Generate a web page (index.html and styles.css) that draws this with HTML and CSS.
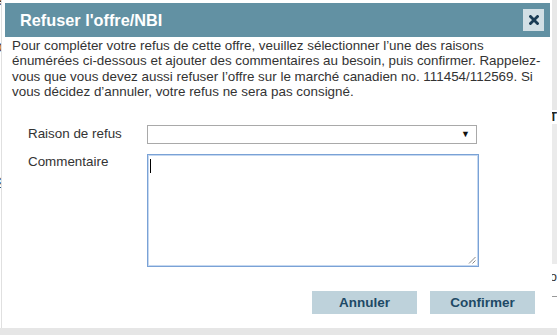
FILE: index.html
```html
<!DOCTYPE html>
<html lang="fr">
<head>
<meta charset="utf-8">
<title>Refuser l'offre/NBI</title>
<link rel="stylesheet" href="styles.css">
</head>
<body>
<div class="page">
  <div class="page-main">
    <span class="frag frag-e">e</span>
    <span class="frag frag-0">0</span>
    <span class="frag frag-i">i</span>
    <span class="frag frag-link">:</span>
    <span class="frag frag-link">i</span>
    <span class="frag frag-link">K</span>
  </div>
  <div class="page-side">
    <div class="side-top"></div>
    <span class="side-t">T</span>
    <div class="side-mid"></div>
    <span class="side-o">o</span>
    <div class="side-line"></div>
  </div>
</div>
<div class="page-footer"></div>

<div class="dialog" role="dialog" aria-labelledby="dlg-title">
  <div class="dialog-titlebar">
    <span class="dialog-title" id="dlg-title">Refuser l'offre/NBI</span>
    <button class="dialog-close" type="button" aria-label="Fermer">
      <svg width="10" height="10" viewBox="0 0 10 10"><path d="M1.5 1.5 L8.5 8.5 M8.5 1.5 L1.5 8.5" stroke="#1b3c55" stroke-width="2.8" stroke-linecap="square"/></svg>
    </button>
  </div>
  <div class="dialog-body">
    <p class="intro">Pour compléter votre refus de cette offre, veuillez sélectionner l’une des raisons<br>énumérées ci-dessous et ajouter des commentaires au besoin, puis confirmer. Rappelez-<br>vous que vous devez aussi refuser l’offre sur le marché canadien no. 111454/112569. Si<br>vous décidez d’annuler, votre refus ne sera pas consigné.</p>
    <div class="form">
      <div class="row row-select">
        <label class="label">Raison de refus</label>
        <div class="select"><span class="arrow">▼</span></div>
      </div>
      <div class="row row-text">
        <label class="label">Commentaire</label>
        <div class="textarea">
          <span class="caret"></span>
          <svg class="grip" width="9" height="9" viewBox="0 0 9 9"><path d="M8.5 2 L2 8.5 M8.5 5.5 L5.5 8.5" stroke="#888" stroke-width="1"/></svg>
        </div>
      </div>
    </div>
    <div class="actions">
      <button class="btn" type="button">Annuler</button>
      <button class="btn" type="button">Confirmer</button>
    </div>
  </div>
</div>
</body>
</html>
```
FILE: styles.css
```css
html, body {
  margin: 0;
  padding: 0;
}
body {
  width: 557px;
  height: 335px;
  overflow: hidden;
  background: #ffffff;
  font-family: "Liberation Sans", Arial, sans-serif;
  position: relative;
}
.page {
  display: flex;
  height: 328px;
}
.page-main {
  width: 553px;
  display: flex;
  flex-direction: column;
  font-size: 13px;
  color: #333;
}
.frag {
  display: block;
  margin-left: -5px;
  line-height: 14px;
}
.frag-e { margin-top: -6px; }
.frag-0 { margin-top: 33px; }
.frag-i { margin-top: 48px; color: #1c4f7a; font-weight: bold; }
.frag-link { color: #2a5d8a; text-decoration: underline; margin-top: 10px; }
.page-side {
  flex: 1;
  display: flex;
  flex-direction: column;
  background: #ffffff;
}
.side-top {
  height: 110px;
  background: #e8e8e8;
}
.side-t {
  font-size: 12px;
  font-weight: bold;
  color: #222;
  line-height: 14px;
}
.side-mid {
  height: 140px;
  background: #ebebeb;
}
.side-o {
  font-size: 13px;
  color: #333;
  line-height: 14px;
  margin-top: 6px;
}
.side-line {
  margin-top: 12px;
  height: 1px;
  background: #999;
}
.page-footer {
  height: 7px;
  background: #e6e6e6;
}

/* dialog */
.dialog {
  position: absolute;
  left: 1px;
  top: 0;
  width: 551px;
  height: 328px;
  background: #ffffff;
  border-left: 1px solid #e0e0e0;
  box-sizing: border-box;
  display: flex;
  flex-direction: column;
  padding: 3px 2px 0 3px;
}
.dialog-titlebar {
  height: 34px;
  background: #6291a3;
  display: flex;
  align-items: center;
  justify-content: space-between;
  padding: 0 6px 0 15px;
  flex-shrink: 0;
}
.dialog-title {
  color: #ffffff;
  font-weight: bold;
  font-size: 16.3px;
}
.dialog-close {
  width: 21px;
  height: 22px;
  padding: 0;
  border: none;
  background: #d2dfe5;
  display: flex;
  align-items: center;
  justify-content: center;
}
.dialog-body {
  flex: 1;
  display: flex;
  flex-direction: column;
  padding: 0 4px 0 7px;
}
.intro {
  margin: 1px 0 0 0;
  font-size: 13.4px;
  line-height: 15.4px;
  white-space: nowrap;
  color: #333333;
}
.form {
  display: flex;
  flex-direction: column;
  gap: 10px;
  margin-top: 25px;
}
.row {
  display: flex;
  align-items: flex-start;
}
.label {
  width: 119px;
  padding-left: 16px;
  font-size: 13.4px;
  color: #333333;
  flex-shrink: 0;
}
.row-select .label { padding-top: 1px; }
.select {
  width: 330px;
  height: 19px;
  box-sizing: border-box;
  border: 1px solid #a9a9a9;
  background: #fff;
  display: flex;
  align-items: center;
  justify-content: flex-end;
  padding-right: 6px;
}
.arrow {
  font-size: 9px;
  color: #111;
  line-height: 9px;
}
.row-text .label { padding-top: 0px; }
.textarea {
  width: 332px;
  height: 113px;
  box-sizing: border-box;
  border: 1px solid #7aa2d6;
  box-shadow: inset 0 0 0 1px #c5d8f0;
  background: #fff;
  display: flex;
  flex-direction: column;
  justify-content: space-between;
  align-items: flex-start;
  padding: 4px 2px 2px 2px;
}
.caret {
  width: 1px;
  height: 14px;
  background: #000;
}
.grip {
  align-self: flex-end;
}
.actions {
  display: flex;
  justify-content: flex-end;
  gap: 13px;
  margin-top: 24px;
  padding-right: 11px;
}
.btn {
  width: 105px;
  height: 23px;
  border: none;
  padding: 0;
  background: #bed2db;
  color: #1e4a66;
  font-family: "Liberation Sans", Arial, sans-serif;
  font-weight: bold;
  font-size: 13.5px;
}
```
